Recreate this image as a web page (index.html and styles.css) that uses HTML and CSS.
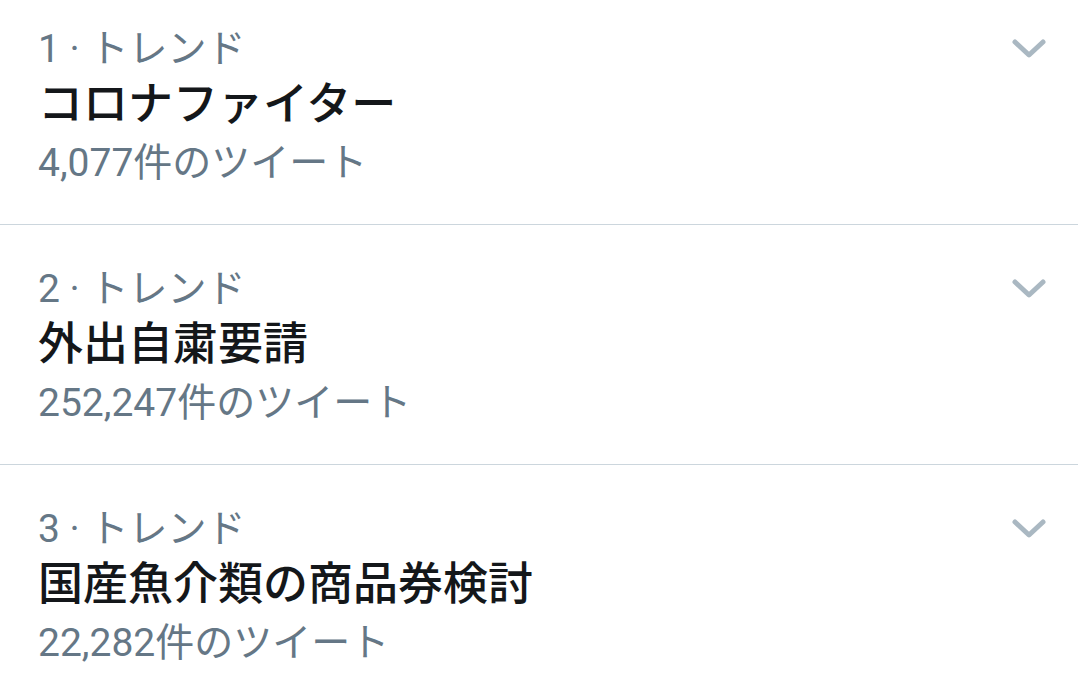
FILE: index.html
```html
<!DOCTYPE html>
<html lang="ja">
<head>
    <meta charset="UTF-8">
    <meta name="viewport" content="width=device-width, initial-scale=1.0">
    <title>トレンド</title>
    <link rel="stylesheet" href="styles.css">
</head>
<body>
    <div class="trends">
        <div class="trend">
            <div class="trend-body">
                <div class="trend-meta">1 · トレンド</div>
                <div class="trend-name">コロナファイター</div>
                <div class="trend-count">4,077件のツイート</div>
            </div>
            <div class="trend-more">
                <svg viewBox="0 0 40 40"><polyline points="6,13 20,26 34,13"/></svg>
            </div>
        </div>
        <div class="trend">
            <div class="trend-body">
                <div class="trend-meta">2 · トレンド</div>
                <div class="trend-name">外出自粛要請</div>
                <div class="trend-count">252,247件のツイート</div>
            </div>
            <div class="trend-more">
                <svg viewBox="0 0 40 40"><polyline points="6,13 20,26 34,13"/></svg>
            </div>
        </div>
        <div class="trend">
            <div class="trend-body">
                <div class="trend-meta">3 · トレンド</div>
                <div class="trend-name">国産魚介類の商品券検討</div>
                <div class="trend-count">22,282件のツイート</div>
            </div>
            <div class="trend-more">
                <svg viewBox="0 0 40 40"><polyline points="6,13 20,26 34,13"/></svg>
            </div>
        </div>
    </div>
</body>
</html>
```

FILE: styles.css
```css
body {
    margin: 0;
    padding: 0;
    background-color: #fff;
    font-family: Roboto, "Noto Sans CJK JP", sans-serif;
    overflow: hidden;
}
.trends {
    margin-top: -15px;
}
.trend {
    display: flex;
    align-items: flex-start;
    padding: 38px 29px 33px 38px;
    border-bottom: 1px solid #ccd6dd;
}
.trend-body {
    flex: 1;
}
.trend-meta {
    font-size: 39px;
    line-height: 52px;
    color: #657786;
}
.trend-name {
    font-size: 45px;
    line-height: 60px;
    font-weight: 500;
    color: #14171a;
}
.trend-count {
    font-size: 39px;
    line-height: 56px;
    color: #657786;
}
.trend-more {
    height: 52px;
    display: flex;
    align-items: center;
}
.trend-more svg {
    width: 40px;
    height: 40px;
    fill: none;
    stroke: #aab8c2;
    stroke-width: 5;
    stroke-linecap: round;
    stroke-linejoin: round;
}
```
